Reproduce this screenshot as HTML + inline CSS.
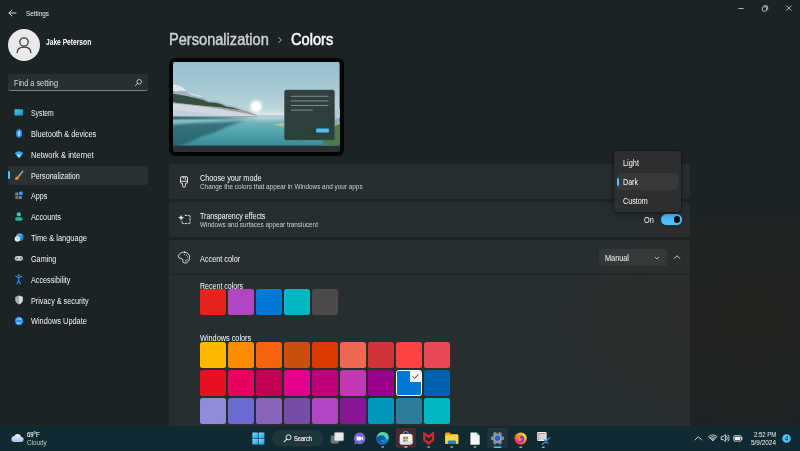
<!DOCTYPE html>
<html>
<head>
<meta charset="utf-8">
<title>Settings</title>
<style>
*{box-sizing:border-box;margin:0;padding:0}
html,body{width:800px;height:451px;overflow:hidden;background:#1c2325;font-family:"Liberation Sans",sans-serif;color:#fff}
#root{position:absolute;left:0;top:0;width:800px;height:451px;overflow:hidden;background:radial-gradient(ellipse 215px 125px at 752px 318px,rgba(35,34,28,0.720) 0%,rgba(35,34,28,0.450) 45%,rgba(35,34,28,0) 100%),#1c2325}
.a{position:absolute}
.t{position:absolute;white-space:nowrap;line-height:1;transform-origin:0 50%}
.nav{font-size:8px;color:#f2f2f2;left:31px}
.card{position:absolute;left:169px;width:521px;background:rgba(255,255,255,0.050);border-radius:3px}
.ct{font-size:8px;color:#fafafa;left:200px}
.cs{font-size:6.6px;color:#cfd2d3;left:200px}
.sw{position:absolute;width:26px;height:26px;border-radius:2.5px}
</style>
</head>
<body>
<div id="root">

<!-- title bar -->
<svg class="a" style="left:8px;top:9px" width="9" height="8" viewBox="0 0 9 8"><path d="M1 4h7M4 1L1 4l3 3" fill="none" stroke="#e8e8e8" stroke-width="0.9" stroke-linecap="round" stroke-linejoin="round"/></svg>
<svg class="a" style="left:735px;top:2px" width="60" height="16" viewBox="0 0 60 16">
 <path d="M3.5 6.5h5" stroke="#e0e0e0" stroke-width="0.8" fill="none"/>
 <rect x="27.4" y="4.9" width="4.200" height="4.200" rx="1" fill="none" stroke="#e0e0e0" stroke-width="0.8"/>
 <path d="M28.600 3.700h2.600a1.500 1.500 0 0 1 1.500 1.500v2.600" fill="none" stroke="#e0e0e0" stroke-width="0.8"/>
 <path d="M51.4 3.6l5 5M56.4 3.6l-5 5" stroke="#e0e0e0" stroke-width="0.8" fill="none"/>
</svg>

<!-- profile -->
<div class="a" style="left:8px;top:29px;width:32px;height:32px;border-radius:50%;background:#e9e9e9"></div>
<svg class="a" style="left:8px;top:29px" width="32" height="32" viewBox="0 0 32 32"><circle cx="16" cy="13" r="4.2" fill="none" stroke="#3c3c3c" stroke-width="1.3"/><path d="M9.2 23.6c0-4 3-5.4 6.8-5.4s6.8 1.4 6.8 5.4" fill="none" stroke="#3c3c3c" stroke-width="1.3" stroke-linecap="round"/></svg>

<!-- search -->
<div class="a" style="left:8px;top:74px;width:140px;height:17px;border-radius:3px;background:rgba(255,255,255,0.058);border-bottom:1px solid #7d8284"></div>
<svg class="a" style="left:134px;top:78px" width="9" height="9" viewBox="0 0 9 9"><circle cx="5.2" cy="3.8" r="2.3" fill="none" stroke="#e0e0e0" stroke-width="0.8"/><path d="M3.5 5.5L1.4 7.6" stroke="#e0e0e0" stroke-width="0.9" stroke-linecap="round"/></svg>

<!-- nav selected -->
<div class="a" style="left:8px;top:166px;width:140px;height:18.5px;border-radius:3px;background:rgba(255,255,255,0.065)"></div>
<div class="a" style="left:8.300px;top:171px;width:1.600px;height:7.600px;border-radius:1px;background:#4cc2ff"></div>


<!-- nav icons -->
<svg class="a" style="left:12px;top:105px" width="14" height="224" viewBox="0 0 14 224">
 <defs><linearGradient id="glb" x1="0" y1="0" x2="1" y2="1"><stop offset="0" stop-color="#3fd0ee"/><stop offset="1" stop-color="#1470d6"/></linearGradient><linearGradient id="sysg" x1="0" y1="0" x2="1" y2="1"><stop offset="0" stop-color="#3ccbea"/><stop offset="1" stop-color="#1a8fcb"/></linearGradient></defs>
 <!-- system -->
 <rect x="2.500" y="4.300" width="8.600" height="6.200" rx="0.800" fill="url(#sysg)"/>
 <!-- bluetooth -->
 <ellipse cx="7" cy="28.5" rx="3" ry="4.2" fill="#1e90ff"/><path d="M5.8 27l2.4 3-1.2 1v-5l1.2 1-2.4 3" fill="none" stroke="#fff" stroke-width="0.6"/>
 <!-- network -->
 <path d="M2.6 48.2a6.2 6.2 0 0 1 8.8 0L7 53z" fill="#2aa8f2"/><path d="M4.6 50.3a3.4 3.4 0 0 1 4.8 0L7 53z" fill="#8fd6ff"/>
 <!-- personalization -->
 <path d="M5.700 71.400L10.200 65.700a0.700 0.700 0 0 1 1.100 0.900L6.900 72.400z" fill="#9fb0c0"/><path d="M2.700 74.600c0.500-1 0.500-2.400 1.900-3.100 0.700-0.300 1.500 0 1.900 0.500 0.500 0.600 0.500 1.400 0 2-0.900 1-2.500 1-3.800 0.600z" fill="#f58a1f"/>
 <!-- apps -->
 <rect x="3.300" y="87.500" width="3" height="3" fill="#7d858b"/><rect x="3.300" y="91" width="3" height="3" fill="#6a7278"/><rect x="6.800" y="91" width="3" height="3" fill="#7d858b"/><path d="M7.200 86.700h3.400v3.400h-3.400z" fill="#2a8ff0"/><path d="M8.900 86.300l2 2-2 2-2-2z" fill="#3aa0ff"/>
 <!-- accounts -->
 <circle cx="6.800" cy="109.300" r="2.100" fill="#2ecfb4"/><rect x="3" y="112.200" width="7.600" height="3.500" rx="1.750" fill="#1fb59c"/>
 <!-- time -->
 <circle cx="7.700" cy="132.200" r="3.800" fill="url(#glb)"/><path d="M5.600 129.600a3.800 3.800 0 0 1 5 0.400c-1.800-0.400-3.600-0.300-5-0.400z" fill="#8fe0f5" opacity="0.700"/><circle cx="5.300" cy="133.900" r="2.600" fill="#eef2f6"/><path d="M5.300 132.500v1.500h1" stroke="#4a6a8a" stroke-width="0.500" fill="none"/>
 <!-- gaming -->
 <rect x="2.700" y="151" width="8.300" height="4.800" rx="2.400" fill="#c3c9cf"/><circle cx="8.900" cy="153.400" r="0.800" fill="#3a6fc0"/><path d="M4.200 153.400h2M5.200 152.400v2" stroke="#4d5a66" stroke-width="0.600"/>
 <!-- accessibility -->
 <circle cx="6.700" cy="170.300" r="1.150" fill="#1e90ff"/><path d="M3.700 171.300l3 1.600 3-1.600M6.700 172.800v2.800M6.700 175.400l-1.700 3.400M6.700 175.400l1.700 3.400" stroke="#1e90ff" stroke-width="1.200" fill="none" stroke-linecap="round" stroke-linejoin="round"/>
 <!-- privacy -->
 <path d="M7 190.600l3.800 1.300v2.900c0 2.300-1.500 3.700-3.800 4.600-2.300-0.900-3.800-2.300-3.800-4.600v-2.900z" fill="#aab0b5"/><path d="M7 190.600l3.800 1.300v2.900c0 2.300-1.500 3.700-3.800 4.600z" fill="#d4d8dc"/>
 <!-- update -->
 <circle cx="7" cy="216" r="4.200" fill="#1f8ef1"/><path d="M4.800 215.400a2.300 2.300 0 0 1 4-1M9.200 216.600a2.300 2.300 0 0 1-4 1" stroke="#fff" stroke-width="0.700" fill="none"/><path d="M8.900 213.300v1.300h-1.300M5.100 218.700v-1.300h1.300" stroke="#fff" stroke-width="0.600" fill="none"/>
</svg>

<!-- page title -->
<svg class="a" style="left:277px;top:36px" width="6" height="8" viewBox="0 0 6 8"><path d="M1.800 1.600L4.400 4 1.800 6.400" fill="none" stroke="#cfd2d3" stroke-width="0.900" stroke-linecap="round" stroke-linejoin="round"/></svg>

<!-- preview -->
<div class="a" style="left:169.300px;top:57.500px;width:174.700px;height:98px;border-radius:6px;background:#020303"></div>
<div class="a" id="wall" style="left:173px;top:62px;width:166.500px;height:89.600px;border-radius:2px;overflow:hidden;background:#2a3134">
<svg width="166.500" height="83.600" viewBox="0 0 166.500 83.600" style="display:block">
 <defs>
  <linearGradient id="sky" x1="0" y1="0" x2="0" y2="1"><stop offset="0" stop-color="#96bfce"/><stop offset="0.550" stop-color="#abcbd4"/><stop offset="1" stop-color="#c6dbdc"/></linearGradient>
  <linearGradient id="wat" x1="0" y1="0" x2="0" y2="1"><stop offset="0" stop-color="#86bfc4"/><stop offset="0.250" stop-color="#6ab2b9"/><stop offset="0.600" stop-color="#4fa2ab"/><stop offset="1" stop-color="#398a96"/></linearGradient>
  <radialGradient id="sun"><stop offset="0" stop-color="#fff"/><stop offset="0.500" stop-color="#fff"/><stop offset="0.620" stop-color="#f4f9f6" stop-opacity="0.600"/><stop offset="1" stop-color="#dcebe8" stop-opacity="0"/></radialGradient>
  <radialGradient id="glow"><stop offset="0" stop-color="#e4f0ec" stop-opacity="0.700"/><stop offset="1" stop-color="#d6e6e4" stop-opacity="0"/></radialGradient>
  <linearGradient id="haze" x1="0" y1="0" x2="0" y2="1"><stop offset="0" stop-color="#dfeae8" stop-opacity="0"/><stop offset="1" stop-color="#dfeae8" stop-opacity="0.750"/></linearGradient>
  <linearGradient id="dlg" x1="0" y1="0" x2="0.300" y2="1"><stop offset="0" stop-color="#323f42"/><stop offset="1" stop-color="#2b4039"/></linearGradient>
  <linearGradient id="refl" x1="0" y1="0" x2="1" y2="0"><stop offset="0" stop-color="#1f5560" stop-opacity="0.850"/><stop offset="0.600" stop-color="#2c6a74" stop-opacity="0.500"/><stop offset="1" stop-color="#3b808a" stop-opacity="0"/></linearGradient>
  <filter id="b1" x="-10%" y="-10%" width="120%" height="120%"><feGaussianBlur stdDeviation="0.700"/></filter>
  <filter id="b3" x="-10%" y="-20%" width="120%" height="140%"><feGaussianBlur stdDeviation="1"/></filter>
  <filter id="b2" x="-10%" y="-30%" width="120%" height="160%"><feGaussianBlur stdDeviation="1.600"/></filter>
 </defs>
 <rect width="166.500" height="56" fill="url(#sky)"/>
 <rect y="54.400" width="166.500" height="29.200" fill="url(#wat)"/>
 <ellipse cx="96" cy="53.500" rx="52" ry="7.500" fill="url(#glow)"/>
 <rect x="70" y="50" width="97" height="5" fill="url(#haze)"/>
 <g filter="url(#b1)">
  <path d="M-1 22.600L3.600 23 7.300 24 11.100 26.300 13.600 29.600 20.300 32.100 27 33.300 30.300 35.500 35.300 38.800 43.600 39.300 48.600 40.500 53.600 43 60.200 43.800 66.900 46.300 75.200 49.600 80.200 51.600 88 54.800H-1z" fill="#9fb3c4"/>
  <path d="M-1 22.600L3.600 23 7.300 24 11.100 26.300 13.600 29.600 8 28.500 3 29.500-1 28z" fill="#dfe6ec"/>
  <path d="M13.600 29.600L20.300 32.100 27 33.300 30.300 35.500 24 34.600 18 33z" fill="#d5dde6"/>
  <path d="M-1 31.500c4 0.500 8 1.200 12 2 4 0.800 7 1.600 10 2.300 3 0.700 6 1.300 9 2.200l5.500 2.200 8 0.800 5 1.300 5 2.400 6.600 1 6.700 2.400 8.300 3.400L72 49.400 63.600 48 46.900 45.500 30.300 43.900 13.600 42.200-1 40.500z" fill="#34503f"/>
  <path d="M-1 40.300L13.600 42 30.300 43.700 46.900 45.300 63.600 47.800 75.200 49.800 84 53v2H-1z" fill="#a69d97"/>
 </g>
 <path d="M-1 41.200c10 0.800 20 1.900 30 3.200 12 1.600 24 3.500 36 5.600 6 1.100 12 2.200 18 3.400l5 0.800H-1z" fill="#cfd8e1" filter="url(#b1)"/>
 <path d="M-1 48c10 0.500 22 2 34 3.600 10 1.400 20 2.600 30 3.400H-1z" fill="#bfccd6" opacity="0.700" filter="url(#b1)"/>
 <rect x="-1" y="54.500" width="84" height="3" fill="url(#refl)" filter="url(#b1)"/>
 <path d="M-1 57.800h66c-14 0.900-32 2-44 3.200-8 0.800-15 1.600-22 2.400z" fill="#8cc2c5" opacity="0.600" filter="url(#b1)"/>
 <path d="M-1 62.900c10-1 30-2.200 47.900-2.600 10-0.400 18-0.700 25-1-8 1.800-16 4.600-25 8.600-6 2.700-11 4.700-16.600 5.800-6 2.400-11.400 5-16.700 7.500-2 1-4.600 1.400-6.600 1.700l-3 2.700H-1z" fill="#1d4e57" opacity="0.620" filter="url(#b3)"/>
 <circle cx="83.200" cy="44.500" r="8.600" fill="url(#sun)"/>
 <path d="M101 62.800c4-1.400 8-1.900 12-1.900v3.400c-4 0-8-0.300-12-1.500z" fill="#c9bd9c" opacity="0.900" filter="url(#b1)"/>
 <rect x="86" y="53.400" width="27" height="1.400" fill="#9db4bf" opacity="0.800" filter="url(#b1)"/>
 <path d="M160 50c2-1 4-2.400 7-3v9l-7 2z" fill="#b6c7cf" opacity="0.900"/>
 <path d="M158 62l9-3v7l-9 1z" fill="#b8ad8c" opacity="0.800"/>
 <path d="M152 68l15-6v21.600h-17z" fill="#4d7a48"/>
 <rect x="111.500" y="28" width="50" height="50" rx="1.800" fill="url(#dlg)"/>
 <rect x="111.500" y="28" width="50" height="50" rx="1.800" fill="none" stroke="#46555a" stroke-width="0.500"/>
 <path d="M117.800 34.300h37.800M117.800 38.900h37.800M117.800 43.500h37.800M117.800 48.100h22" stroke="#879497" stroke-width="0.900"/>
 <rect x="143.100" y="66.400" width="12.900" height="4" rx="1" fill="#4cc2ff"/>
</svg>
</div>

<!-- cards -->
<div class="card" style="top:164px;height:35px"></div>
<div class="card" style="top:201.500px;height:35px"></div>
<div class="card" style="top:239.500px;height:190px"></div>
<div class="a" style="left:169px;top:274px;width:521px;height:1px;background:rgba(0,0,0,0.220)"></div>

<!-- card icons -->
<svg class="a" style="left:170px;top:165px" width="30" height="110" viewBox="170 165 30 110">
 <g fill="none" stroke="#f2f2f2" stroke-width="0.900" stroke-linejoin="round" stroke-linecap="round">
  <!-- brush / mode -->
  <path d="M180.500 177.800a1.100 1.100 0 0 1 1.100-1.100h4.800a1.100 1.100 0 0 1 1.100 1.100v4.500a1.100 1.100 0 0 1-1.100 1.100h-0.900v2.300a1.500 1.500 0 0 1-3 0v-2.300h-0.900a1.100 1.100 0 0 1-1.100-1.100z"/>
  <path d="M180.500 181.300h7M183.300 176.900v1.500M185.300 176.900v2.600"/>
  <!-- transparency -->
  <path d="M185.200 215.400h1.600M188.400 215.400h0.400a1.200 1.200 0 0 1 1.200 1.200v0.500M190 218.700v1.700M190 222v0.400a1.200 1.200 0 0 1-1.200 1.200h-0.500M186.700 223.600h-1.600M183.500 223.600h-0.300a1.200 1.200 0 0 1-1.200-1.200v-0.600" stroke-width="0.950"/>
  <!-- palette -->
  <path d="M184.400 252.100c3.100 0 5.200 2.300 5.200 5.300 0 3.200-2.100 5.700-4.400 5.700-1.900 0-2.300-1.300-2.400-2.500-0.100-1.300-0.600-2-1.800-2.100-1.500-0.100-2.500-0.800-2.500-2.200 0-2.300 2.700-4.200 5.900-4.200z"/>
 </g>
 <path d="M181.100 214.700l0.850 2.150 2.150 0.850-2.150 0.850-0.850 2.150-0.850-2.150-2.150-0.850 2.150-0.850z" fill="#f2f2f2"/>
 <g fill="#f2f2f2"><circle cx="184.400" cy="254.200" r="0.550"/><circle cx="186.500" cy="255" r="0.550"/><circle cx="187.500" cy="257" r="0.550"/><circle cx="187.300" cy="259.200" r="0.550"/><circle cx="185.800" cy="260.800" r="0.700"/></g>
</svg>

<!-- brush/mode -->
 <path d="M3.600 3.400h5.800v4.600a1 1 0 0 1-1 1H7.600v2.400a1.100 1.100 0 0 1-2.200 0V9H4.600a1 1 0 0 1-1-1zM3.600 6.400h5.800M6 3.600v1.400M7.600 3.600v1.900" fill="none" stroke="#f0f0f0" stroke-width="0.800" stroke-linejoin="round"/>
 <!-- transparency -->
 <path d="M5 42.800h1M7.400 42.800h1.200M10 42.800h0.800a0.800 0.800 0 0 1 0.800 0.800v0.800M11.600 45.800v1.200M11.600 48.400v0.800a0.800 0.800 0 0 1-0.800 0.800H10M8.600 50H7.400M6 50H5.200a0.800 0.800 0 0 1-0.800-0.800v-1" fill="none" stroke="#f0f0f0" stroke-width="0.800"/>
 <path d="M3.200 42.600l0.700 1.700 1.700 0.700-1.700 0.700-0.700 1.700-0.700-1.700-1.700-0.700 1.700-0.700z" fill="#f0f0f0"/>
 <!-- palette -->
 <path d="M6.400 81.200a4.600 4.600 0 0 1 4.900 4.600c0 2.700-2 4.800-4.200 4.800-1.400 0-1.800-0.900-1.400-1.900 0.400-1-0.200-1.500-1-1.500-1.100 0-2.600-0.400-2.600-2.200 0-2.100 1.900-3.800 4.300-3.800z" fill="none" stroke="#f0f0f0" stroke-width="0.800"/>
 <circle cx="5" cy="84" r="0.600" fill="#f0f0f0"/><circle cx="7.400" cy="83.400" r="0.600" fill="#f0f0f0"/><circle cx="9.200" cy="85.200" r="0.600" fill="#f0f0f0"/><circle cx="9" cy="87.600" r="0.600" fill="#f0f0f0"/>
</svg>


<!-- toggle -->
<div class="a" style="left:661px;top:214px;width:21px;height:11px;border-radius:5.500px;background:#4cc2ff"></div>
<div class="a" style="left:673.500px;top:216.200px;width:6.600px;height:6.600px;border-radius:50%;background:#0a0a0a"></div>

<!-- accent dropdown -->
<div class="a" style="left:599px;top:249.200px;width:68px;height:16.800px;border-radius:3px;background:rgba(255,255,255,0.055)"></div>
<svg class="a" style="left:652.500px;top:253.600px" width="8" height="8" viewBox="0 0 8 8"><path d="M2.200 3.200l1.800 1.800 1.800-1.800" fill="none" stroke="#d8d8d8" stroke-width="0.800" stroke-linecap="round" stroke-linejoin="round"/></svg>
<svg class="a" style="left:672.400px;top:253px" width="10" height="8" viewBox="0 0 10 8"><path d="M2.300 5.400l2.700-2.700 2.700 2.700" fill="none" stroke="#e4e4e4" stroke-width="0.900" stroke-linecap="round" stroke-linejoin="round"/></svg>

<!-- recent colors -->
<div class="sw" style="left:200px;top:289.300px;background:#e3231c"></div>
<div class="sw" style="left:228px;top:289.300px;background:#b146c2"></div>
<div class="sw" style="left:256px;top:289.300px;background:#0078d7"></div>
<div class="sw" style="left:284px;top:289.300px;background:#00b7c3"></div>
<div class="sw" style="left:312px;top:289.300px;background:#4c4a48"></div>

<!-- windows colors row1 -->
<div class="sw" style="left:200px;top:342.100px;background:#ffb900"></div>
<div class="sw" style="left:228px;top:342.100px;background:#ff8c00"></div>
<div class="sw" style="left:256px;top:342.100px;background:#f7630c"></div>
<div class="sw" style="left:284px;top:342.100px;background:#ca5010"></div>
<div class="sw" style="left:312px;top:342.100px;background:#da3b01"></div>
<div class="sw" style="left:340px;top:342.100px;background:#ef6950"></div>
<div class="sw" style="left:368px;top:342.100px;background:#d13438"></div>
<div class="sw" style="left:396px;top:342.100px;background:#ff4343"></div>
<div class="sw" style="left:424px;top:342.100px;background:#e74856"></div>
<!-- row2 -->
<div class="sw" style="left:200px;top:370.100px;background:#e81123"></div>
<div class="sw" style="left:228px;top:370.100px;background:#ea005e"></div>
<div class="sw" style="left:256px;top:370.100px;background:#c30052"></div>
<div class="sw" style="left:284px;top:370.100px;background:#e3008c"></div>
<div class="sw" style="left:312px;top:370.100px;background:#bf0077"></div>
<div class="sw" style="left:340px;top:370.100px;background:#c239b3"></div>
<div class="sw" style="left:368px;top:370.100px;background:#9a0089"></div>
<div class="sw" style="left:396px;top:370.100px;background:#0078d7;border:1.200px solid #fff"></div>
<div class="a" style="left:410px;top:371.300px;width:10.800px;height:10.800px;background:#f4f4f4;border-radius:0 1.500px 0 0"></div>
<svg class="a" style="left:410px;top:371.300px" width="11" height="11" viewBox="0 0 11 11"><path d="M2.800 5.600l1.800 1.800 3.600-3.800" fill="none" stroke="#222" stroke-width="0.900" stroke-linecap="round" stroke-linejoin="round"/></svg>
<div class="sw" style="left:424px;top:370.100px;background:#0063b1"></div>
<!-- row3 -->
<div class="sw" style="left:200px;top:398.100px;background:#8e8cd8"></div>
<div class="sw" style="left:228px;top:398.100px;background:#6b69d6"></div>
<div class="sw" style="left:256px;top:398.100px;background:#8764b8"></div>
<div class="sw" style="left:284px;top:398.100px;background:#744da9"></div>
<div class="sw" style="left:312px;top:398.100px;background:#b146c2"></div>
<div class="sw" style="left:340px;top:398.100px;background:#881798"></div>
<div class="sw" style="left:368px;top:398.100px;background:#0099bc"></div>
<div class="sw" style="left:396px;top:398.100px;background:#2d7d9a"></div>
<div class="sw" style="left:424px;top:398.100px;background:#00b7c3"></div>

<!-- mode flyout -->
<div class="a" style="left:614.200px;top:150.800px;width:67px;height:61.200px;border-radius:4px;background:#2c2e30;box-shadow:0 2px 7px rgba(0,0,0,0.450),0 0 0 0.600px rgba(10,12,14,0.450)"></div>
<div class="a" style="left:616.600px;top:173.300px;width:61.800px;height:17px;border-radius:2.500px;background:#36383a"></div>
<div class="a" style="left:617px;top:178px;width:1.600px;height:7.800px;border-radius:1px;background:#4cc2ff"></div>

<!-- taskbar -->
<div class="a" id="taskbar" style="left:0;top:425.500px;width:800px;height:26px;background:#112a31"></div>

<!-- taskbar icons -->
<svg class="a" style="left:0;top:425px" width="800" height="26" viewBox="0 425 800 26">
 <defs>
  <linearGradient id="cl" x1="0" y1="0" x2="0" y2="1"><stop offset="0" stop-color="#f4f8ff"/><stop offset="1" stop-color="#9fc0ee"/></linearGradient>
  <linearGradient id="wn" x1="0" y1="0" x2="1" y2="1"><stop offset="0" stop-color="#7fe0ff"/><stop offset="1" stop-color="#1f9be8"/></linearGradient>
  <linearGradient id="edg" x1="0" y1="0" x2="1" y2="1"><stop offset="0" stop-color="#39c5b5"/><stop offset="0.5" stop-color="#1d8fd8"/><stop offset="1" stop-color="#0c59a4"/></linearGradient>
  <linearGradient id="ffx" x1="0.850" y1="0.100" x2="0.200" y2="0.950"><stop offset="0" stop-color="#ffd93a"/><stop offset="0.450" stop-color="#ff8a1a"/><stop offset="0.800" stop-color="#ff3d55"/><stop offset="1" stop-color="#e01c8c"/></linearGradient>
 </defs>
 <!-- weather cloud -->
 <path d="M13.600 442h7.300a2.500 2.500 0 0 0 0.400-5 3.700 3.700 0 0 0-7-0.900 3 3 0 0 0-0.700 5.900z" fill="url(#cl)"/>
 <!-- start -->
 <rect x="252.400" y="432.500" width="5.700" height="5.700" rx="0.500" fill="url(#wn)"/><rect x="258.700" y="432.500" width="5.700" height="5.700" rx="0.500" fill="url(#wn)"/>
 <rect x="252.400" y="438.800" width="5.700" height="5.700" rx="0.500" fill="url(#wn)"/><rect x="258.700" y="438.800" width="5.700" height="5.700" rx="0.500" fill="url(#wn)"/>
 <!-- search pill -->
 <rect x="272" y="430" width="51.500" height="16.600" rx="8.300" fill="#1f363d"/>
 <circle cx="288.500" cy="437.300" r="2.500" fill="none" stroke="#f2f2f2" stroke-width="1"/><path d="M286.600 439.300l-2.300 2.300" stroke="#f2f2f2" stroke-width="1.100" stroke-linecap="round"/>
 <!-- task view -->
 <rect x="330.800" y="435.600" width="8" height="8" rx="1" fill="#6f7478"/><rect x="334.600" y="432.400" width="9" height="8.400" rx="1" fill="#e6e8ea"/><rect x="334.600" y="432.400" width="9" height="8.400" rx="1" fill="none" stroke="#b9bdc0" stroke-width="0.400"/>
 <!-- chat -->
 <path d="M359.800 432.600a5.800 5.800 0 1 1-3 10.800l-2.600 0.800 0.800-2.500a5.800 5.800 0 0 1 4.800-9.100z" fill="#7b68d8"/>
 <rect x="356.600" y="436.400" width="4.400" height="4" rx="0.900" fill="#fff"/><path d="M361.200 437.800l1.900-1.200v3.600l-1.900-1.200z" fill="#fff"/>
 <!-- edge -->
 <circle cx="382.700" cy="438.500" r="6.300" fill="url(#edg)"/><path d="M377 440.200a4.400 4.400 0 0 1 8.200-2.800c0.600 1.400-0.500 2.700-2 2.700h-2.400c0 1.600 1.400 2.900 3.600 2.600a5.600 5.600 0 0 1-7.400-2.500z" fill="#0c4f98" opacity="0.850"/><path d="M377.200 437a5.800 5.800 0 0 1 11.500 0.300c0 1.800-1.500 2.500-2.600 2.300 0.800-3.600-5.600-6-8.900-2.600z" fill="#5ee0a0" opacity="0.850"/>
 <rect x="381.250" y="446.300" width="2.900" height="1.500" rx="0.750" fill="#a3abaf"/>
 <!-- store (highlighted) -->
 <rect x="395.700" y="428" width="20.200" height="19.700" rx="2.500" fill="#4a2a2b"/>
 <path d="M403.300 435v-1a2.500 2.500 0 0 1 5 0v1" fill="none" stroke="#3fa2e6" stroke-width="1.100"/>
 <rect x="399.700" y="434.100" width="12.800" height="10.500" rx="2" fill="#f5f6f7"/>
 <path d="M399.700 441h12.800v1.600a2 2 0 0 1-2 2h-8.800a2 2 0 0 1-2-2z" fill="#dfe3e6"/>
 <rect x="403.300" y="436.700" width="2.200" height="2.300" fill="#f25022"/><rect x="405.900" y="436.700" width="2.200" height="2.300" fill="#7fba00"/><rect x="403.300" y="439.400" width="2.200" height="2.300" fill="#00a4ef"/><rect x="405.900" y="439.400" width="2.200" height="2.300" fill="#ffb900"/>
 <rect x="404.100" y="446.200" width="3.500" height="1.500" rx="0.750" fill="#f09bb0"/>
 <!-- mcafee -->
 <path d="M424.300 433.600v6.300l4.350 3.600 4.350-3.600v-6.300l-4.350 3.200z" fill="none" stroke="#d32a32" stroke-width="2.300" stroke-linejoin="miter"/>
 <rect x="427.250" y="446.300" width="2.900" height="1.500" rx="0.750" fill="#a3abaf"/>
 <!-- folder -->
 <path d="M445.200 433.500a1 1 0 0 1 1-1h3.400l1.500 1.400h6.200a1 1 0 0 1 1 1v8.100a1 1 0 0 1-1 1h-11.100a1 1 0 0 1-1-1z" fill="#e9a80e"/>
 <path d="M445.200 436a1 1 0 0 1 1-1h11.100a1 1 0 0 1 1 1v7a1 1 0 0 1-1 1h-11.100a1 1 0 0 1-1-1z" fill="#fbd14e"/>
 <path d="M447.800 441.400a1 1 0 0 1 1-1h6.300a1 1 0 0 1 1 1v2.600h-8.300z" fill="#1f7fd8"/>
 <rect x="450.250" y="446.300" width="2.900" height="1.500" rx="0.750" fill="#a3abaf"/>
 <!-- document -->
 <path d="M470.400 433.400a0.900 0.900 0 0 1 0.900-0.900h5.200l3.200 3.200v8.200a0.900 0.900 0 0 1-0.900 0.900h-7.500a0.900 0.900 0 0 1-0.900-0.900z" fill="#f3f5f6"/><path d="M476.500 432.500l3.200 3.200h-3.200z" fill="#c3c9cc"/>
 <rect x="473.550" y="446.300" width="2.900" height="1.500" rx="0.750" fill="#a3abaf"/>
 <!-- settings (active) -->
 <rect x="487.200" y="428.100" width="20.500" height="20" rx="2.500" fill="#21343b"/>
 <g transform="translate(497.500 438.200)">
  <g fill="#858d96">
   <circle r="5"/>
   <rect x="-1.800" y="-6.600" width="3.600" height="13.200" rx="1.200" transform="rotate(30)"/>
   <rect x="-1.800" y="-6.600" width="3.600" height="13.200" rx="1.200" transform="rotate(90)"/>
   <rect x="-1.800" y="-6.600" width="3.600" height="13.200" rx="1.200" transform="rotate(150)"/>
  </g>
  <circle r="3.500" fill="#a9b1ba"/><circle r="2.700" fill="#1b5cc2"/><circle r="1" fill="#2a7be0"/>
 </g>
 <rect x="493.500" y="446.500" width="8" height="1.500" rx="0.750" fill="#4cc2ff"/>
 <!-- firefox -->
 <circle cx="520.600" cy="438.600" r="6.100" fill="url(#ffx)"/>
 <path d="M522 431.800c0.600 1.300 1.800 2 2.800 3.100 1.200 1.300 2 2.700 1.900 4.400-0.900-1.900-2.200-2.900-4-3.200 0.400-1.400 0.100-2.900-0.700-4.300z" fill="#ffe14a"/>
 <circle cx="520.900" cy="438.700" r="3.200" fill="#6a35d6"/>
 <path d="M517.600 437.600c0.800-1.200 2.200-1.700 3.600-1.400-1 0.500-1.400 1.300-1 2.100 0.800 0.300 1.800 0.200 2.400-0.300 0.300 1.600-0.900 3.100-2.600 3.100-1.500 0-2.700-1.200-2.700-2.600 0-0.300 0.100-0.600 0.300-0.900z" fill="#ff8a1f"/>
 <rect x="519.100" y="446.400" width="3.100" height="1.500" rx="0.750" fill="#a3abaf"/>
 <!-- snipping -->
 <rect x="537.200" y="432" width="9.400" height="9" rx="0.900" fill="#f3f4f5"/>
 <rect x="539" y="433.800" width="6.600" height="6.200" fill="#d4d7da"/>
 <path d="M538.700 440.200v-6.700h7" fill="none" stroke="#d9553f" stroke-width="1" stroke-dasharray="1.300 0.500"/>
 <path d="M542.300 444.300l7.500-6.600M548 443.400l-3.800-3.600" stroke="#2b8fe0" stroke-width="1.200" stroke-linecap="round"/>
 <rect x="541.800" y="446.400" width="3.100" height="1.500" rx="0.750" fill="#a3abaf"/>
 <!-- tray -->
 <path d="M695 440l3.300-3.300 3.300 3.300" fill="none" stroke="#e8e8e8" stroke-width="0.900" stroke-linecap="round" stroke-linejoin="round"/>
 <path d="M708.600 436.600a6 6 0 0 1 8.400 0l-4.200 4.300z" fill="none" stroke="#f0f0f0" stroke-width="0.700"/><path d="M709.900 437.800a4.200 4.200 0 0 1 5.800 0M711.200 439.100a2.300 2.300 0 0 1 3.200 0" fill="none" stroke="#f0f0f0" stroke-width="0.800"/><path d="M711.700 439.700a1.600 1.600 0 0 1 2.200 0l-1.100 1.200z" fill="#f0f0f0"/>
 <path d="M721.200 436.700h1.800l2.400-2v6.800l-2.400-2h-1.800z" fill="none" stroke="#f0f0f0" stroke-width="0.800" stroke-linejoin="round"/><path d="M726.700 436.300a2.600 2.600 0 0 1 0 3.600M728 435a4.500 4.500 0 0 1 0 6.200" fill="none" stroke="#f0f0f0" stroke-width="0.800" stroke-linecap="round"/>
 <rect x="733.700" y="435.700" width="7.600" height="5.400" rx="1.200" fill="none" stroke="#f0f0f0" stroke-width="0.800"/><rect x="734.700" y="436.700" width="5.600" height="3.400" rx="0.600" fill="#f0f0f0"/><path d="M741.900 437.400v2" stroke="#f0f0f0" stroke-width="0.900" stroke-linecap="round"/>
 <circle cx="786.500" cy="438.500" r="4.300" fill="#4cc2ff"/>
</svg>

<div class="t" id="t_settings" style="left:26.00px;top:9.67px;font-size:7.6px;color:#f0f0f0;transform:scaleX(0.8378);">Settings</div>
<div class="t" id="t_name" style="left:46.00px;top:37.62px;font-size:8.6px;color:#ffffff;font-weight:bold;transform:scaleX(0.7755);">Jake Peterson</div>
<div class="t" id="t_find" style="left:14.00px;top:78.67px;font-size:8.3px;color:#dcdcdc;transform:scaleX(0.8833);">Find a setting</div>
<div class="t" id="n1" style="left:31.40px;top:108.90px;font-size:8.5px;color:#f4f4f4;transform:scaleX(0.8044);">System</div>
<div class="t" id="n2" style="left:31.40px;top:129.70px;font-size:8.5px;color:#f4f4f4;transform:scaleX(0.8690);">Bluetooth &amp; devices</div>
<div class="t" id="n3" style="left:31.40px;top:150.50px;font-size:8.5px;color:#f4f4f4;transform:scaleX(0.8939);">Network &amp; internet</div>
<div class="t" id="n4" style="left:31.40px;top:171.80px;font-size:8.5px;color:#f4f4f4;transform:scaleX(0.8396);">Personalization</div>
<div class="t" id="n5" style="left:31.40px;top:192.40px;font-size:8.5px;color:#f4f4f4;transform:scaleX(0.8465);">Apps</div>
<div class="t" id="n6" style="left:31.40px;top:212.90px;font-size:8.5px;color:#f4f4f4;transform:scaleX(0.8550);">Accounts</div>
<div class="t" id="n7" style="left:31.40px;top:233.70px;font-size:8.5px;color:#f4f4f4;transform:scaleX(0.8741);">Time &amp; language</div>
<div class="t" id="n8" style="left:31.40px;top:254.50px;font-size:8.5px;color:#f4f4f4;transform:scaleX(0.8500);">Gaming</div>
<div class="t" id="n9" style="left:31.40px;top:275.80px;font-size:8.5px;color:#f4f4f4;transform:scaleX(0.8510);">Accessibility</div>
<div class="t" id="n10" style="left:31.40px;top:296.60px;font-size:8.5px;color:#f4f4f4;transform:scaleX(0.8527);">Privacy &amp; security</div>
<div class="t" id="n11" style="left:31.40px;top:317.40px;font-size:8.5px;color:#f4f4f4;transform:scaleX(0.8698);">Windows Update</div>
<div class="t" id="t_pers" style="left:169.00px;top:31.91px;font-size:15.7px;color:#cdd0d1;-webkit-text-stroke:0.45px #cdd0d1;transform:scaleX(0.9304);">Personalization</div>
<div class="t" id="t_colors" style="left:291.10px;top:31.91px;font-size:15.7px;color:#ffffff;-webkit-text-stroke:0.5px #ffffff;transform:scaleX(0.9329);">Colors</div>
<div class="t" id="c1" style="left:199.60px;top:173.99px;font-size:8.4px;color:#fafafa;transform:scaleX(0.8705);">Choose your mode</div>
<div class="t" id="c1s" style="left:199.60px;top:184.49px;font-size:7.1px;color:#cdd0d1;transform:scaleX(0.9003);">Change the colors that appear in Windows and your apps</div>
<div class="t" id="c2" style="left:199.60px;top:211.99px;font-size:8.4px;color:#fafafa;transform:scaleX(0.8412);">Transparency effects</div>
<div class="t" id="c2s" style="left:199.60px;top:222.19px;font-size:7.1px;color:#cdd0d1;transform:scaleX(0.8925);">Windows and surfaces appear translucent</div>
<div class="t" id="c3" style="left:199.80px;top:254.99px;font-size:8.4px;color:#fafafa;transform:scaleX(0.8721);">Accent color</div>
<div class="t" id="c4" style="left:199.80px;top:281.59px;font-size:8.4px;color:#fafafa;transform:scaleX(0.8417);">Recent colors</div>
<div class="t" id="c5" style="left:199.80px;top:334.09px;font-size:8.4px;color:#fafafa;transform:scaleX(0.8729);">Windows colors</div>
<div class="t" id="t_on" style="left:643.90px;top:216.19px;font-size:8.4px;color:#fafafa;transform:scaleX(0.8760);">On</div>
<div class="t" id="t_manual" style="left:605.30px;top:253.69px;font-size:8.4px;color:#fafafa;transform:scaleX(0.8737);">Manual</div>
<div class="t" id="m1" style="left:622.90px;top:159.09px;font-size:8.4px;color:#fafafa;transform:scaleX(0.8805);">Light</div>
<div class="t" id="m2" style="left:622.90px;top:178.19px;font-size:8.4px;color:#fafafa;transform:scaleX(0.8481);">Dark</div>
<div class="t" id="m3" style="left:622.90px;top:197.19px;font-size:8.4px;color:#fafafa;transform:scaleX(0.8593);">Custom</div>
<div class="t" id="w1" style="left:27.30px;top:431.01px;font-size:7.2px;color:#f0f0f0;-webkit-text-stroke:0.15px #f0f0f0;transform:scaleX(0.8188);">69°F</div>
<div class="t" id="w2" style="left:27.30px;top:439.21px;font-size:7.2px;color:#c8ccce;transform:scaleX(0.8760);">Cloudy</div>
<div class="t" id="tb_search" style="left:294.00px;top:435.01px;font-size:7.2px;color:#f0f0f0;-webkit-text-stroke:0.2px #f0f0f0;transform:scaleX(0.7901);">Search</div>
<div class="t" id="clk1" style="left:754.00px;top:430.97px;font-size:7.0px;color:#f0f0f0;transform:scaleX(0.8551);">2:52 PM</div>
<div class="t" id="clk2" style="left:751.30px;top:439.37px;font-size:7.0px;color:#f0f0f0;transform:scaleX(0.9174);">5/9/2024</div>
<div class="t" id="badge" style="left:784.90px;top:435.91px;font-size:6.6px;color:#0a1a22;transform:scaleX(0.8715);">4</div>
</div>
</body>
</html>
